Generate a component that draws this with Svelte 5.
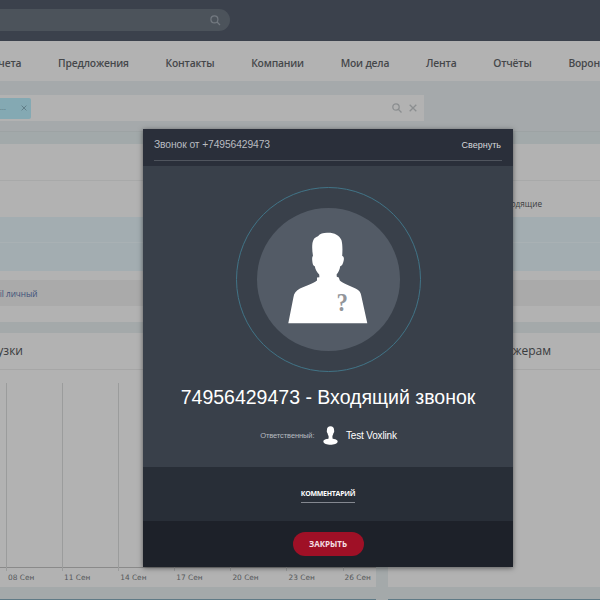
<script>
  const sections = ['Предложения', 'Контакты', 'Компании', 'Мои дела', 'Лента', 'Отчёты', 'Воронка'];
  const days = ['08 Сен', '11 Сен', '14 Сен', '17 Сен', '20 Сен', '23 Сен', '26 Сен'];
</script>

<div class="screen">
  <header class="top">
    <div class="search">
      <svg width="11" height="11" viewBox="0 0 11 11"><circle cx="4.4" cy="4.4" r="3.5" /><path d="M7 7 L10 10" /></svg>
    </div>
  </header>

  <nav>
    <span class="cut">Счета</span>
    {#each sections as s}<span>{s}</span>{/each}
  </nav>

  <div class="filter">
    <div class="filter-bar">
      <div class="tag"><span>...</span><svg width="6" height="6" viewBox="0 0 6 6"><path d="M.6 .6 L5.4 5.4 M5.4 .6 L.6 5.4" /></svg></div>
      <div class="tools">
        <svg width="10" height="10" viewBox="0 0 10 10"><circle cx="4" cy="4" r="3.2" /><path d="M6.4 6.4 L9.5 9.5" /></svg>
        <svg width="8" height="8" viewBox="0 0 8 8"><path d="M.7 .7 L7.3 7.3 M7.3 .7 L.7 7.3" /></svg>
      </div>
    </div>
  </div>
  <div class="strip"></div>

  <section class="list">
    <div class="list-head"></div>
    <div class="row plain"><span>Входящие</span></div>
    <div class="row blue first"></div>
    <div class="row blue"></div>
    <div class="row foot"><span>Email личный</span></div>
  </section>

  <div class="cards">
    <section class="card chart">
      <h2><span>Нагрузки</span></h2>
      <div class="plot">
        {#each days as d}<div class="col"></div>{/each}
      </div>
      <div class="labels">
        {#each days as d}<span>{d}</span>{/each}
      </div>
    </section>
    <section class="card managers">
      <h2><span>менеджерам</span></h2>
    </section>
  </div>
  <div class="next"><i></i><i></i></div>

  <div class="modal">
    <div class="bar">
      <div class="bar-in"><span class="from">Звонок от +74956429473</span><span class="min">Свернуть</span></div>
    </div>
    <div class="body">
      <div class="ring">
        <div class="disc">
          <svg width="80" height="92" viewBox="0 0 80 92">
            <path fill="#fff" d="M39 .7 C46 .4 51.5 3 53.4 8 C54.6 12 54.6 18 54.2 24 C56.8 24.5 56 29 54.6 32 C54 33.6 53 33.8 52.2 34.2 C51.8 38 50.2 40.5 48.6 42.5 L48.8 44.8 L50.8 45.6 L51.8 48.6 C54.5 51 62 54 67.5 56.6 C71.5 58.5 72.6 60.5 73.2 63.5 L79.3 91.3 L.3 91.3 L5.4 65.5 C6 61.5 8 58.6 12 56.6 C18 53.4 26 51 29 48.4 L29 45.6 L31.4 45.2 L31.2 42.5 C29 40 27.2 37.5 26.8 34.2 C25 34 24.4 31 24.2 28 C24 25.6 24.4 24.4 25 24 C23.9 18 23.8 11 25.4 8 C26.8 5 28.4 5.2 30 4.2 C32 1.6 35 .8 39 .7 Z" />
            <text transform="translate(48.6 79) scale(.88 1)">?</text>
          </svg>
        </div>
      </div>
      <div class="title">74956429473 - Входящий звонок</div>
      <div class="owner">
        <span class="resp">Ответственный:</span>
        <svg width="15" height="19" viewBox="0 0 15 19"><path fill="#fff" d="M7.5 .2 C10 .2 11.2 1.8 11 4 C11.4 5 11.2 6.6 10.5 7 C10.2 8.4 9.8 9.3 9.4 10 L9.5 12.4 C11 13 14 13.2 14.5 14.7 C15.5 17.5 11 18.7 7.5 18.7 C4 18.7 -.5 17.5 .5 14.7 C1 13.2 4.3 13 5.6 12.4 L5.6 10 C5.2 9.3 4.7 8.4 4.5 7 C3.8 6.6 3.6 5 4 4 C3.8 1.8 5 .2 7.5 .2 Z" /></svg>
        <span class="name">Test Voxlink</span>
      </div>
    </div>
    <div class="comment"><span>КОММЕНТАРИЙ</span></div>
    <div class="actions"><button>ЗАКРЫТЬ</button></div>
  </div>
</div>

<style>
  .screen { position: relative; width: 600px; height: 600px; overflow: hidden; background: #a4a9aa; font-family: "Open Sans", "Noto Sans", sans-serif; color: #3a3c3e; }
  .screen * { box-sizing: border-box; }
  svg { display: block; fill: none; stroke: none; flex: none; }
  .top { height: 41px; padding-top: 9px; background: #3b414c; }
  .search { width: 230px; height: 22px; border-radius: 0 11px 11px 0; background: #4c535b; display: flex; align-items: center; justify-content: flex-end; padding-right: 9px; }
  .search svg { stroke: #737980; stroke-width: 1.2; }
  nav { height: 40px; background: #b2b2b2; display: flex; justify-content: flex-start; gap: 36.8px; line-height: 44px; font-size: 10.3px; font-weight: 600; letter-spacing: -.18px; color: #45474a; white-space: nowrap; }
  nav span { flex: none; }
  nav .cut { width: 21.3px; display: flex; justify-content: flex-end; }
  .filter { height: 51px; padding-top: 14px; border-bottom: 1px solid #9da3a4; background: #a5a9ab; }
  .filter-bar { width: 424px; height: 26px; background: #b2b2b2; display: flex; align-items: center; justify-content: space-between; padding-right: 7px; }
  .tag { width: 31px; height: 21px; border-radius: 0 2px 2px 0; background: #84a9b3; display: flex; align-items: center; justify-content: space-between; padding: 0 4px 0 0; font-size: 7px; line-height: 16px; letter-spacing: .2px; color: #4e6c78; }
  .tag svg { stroke: #5d7a84; stroke-width: .9; }
  .tools { display: flex; align-items: center; gap: 7px; }
  .tools svg { stroke: #8b8e90; stroke-width: 1.3; }
  .strip { height: 12px; background: #a2a9aa; }
  .list { height: 178px; background: #b2b2b2; }
  .list-head { height: 37px; border-bottom: 1px solid #a8a9a9; }
  .row { display: flex; align-items: center; font-size: 8.2px; white-space: nowrap; }
  .plain { height: 36px; padding: 9px 58px 0 0; justify-content: flex-end; }
  .blue { height: 28px; background: #a3adb1; }
  .blue.first { height: 26px; border-bottom: 1px solid #a9b1b4; }
  .foot { height: 26px; margin-top: 9px; background: #aaaaaa; color: #3d5079; }
  .foot span { width: 37.5px; display: flex; justify-content: flex-end; flex: none; }
  .cards { display: flex; gap: 12px; padding-top: 11px; }
  .card { height: 254px; background: #b2b2b2; }
  .chart { width: 376px; overflow: hidden; }
  .managers { flex: 1; }
  h2 { margin: 0; height: 37px; border-bottom: 1px solid #a6a6a6; font-size: 12px; line-height: 36px; font-weight: 400; white-space: nowrap; display: flex; justify-content: flex-end; }
  .chart h2 { padding-right: 353px; }
  .managers h2 { padding-right: 49px; }
  .plot { height: 198px; padding: 13px 0 0 6px; display: flex; background: linear-gradient(#8a8a8a, #8a8a8a) 0 197px / 100% 1px no-repeat; }
  .col { width: 56.1px; flex: none; height: 188px; border-left: 1px solid #9b9c9c; }
  .labels { display: flex; padding-left: 8px; font: 7.4px/19px "DejaVu Sans", sans-serif; color: #55585a; white-space: nowrap; }
  .labels span { width: 56.1px; flex: none; }
  .next { height: 13px; padding-top: 12px; display: flex; gap: 12px; }
  .next i { flex: none; width: 376px; height: 1px; background: #5f7a86; }

  .modal { position: absolute; left: 143px; top: 129px; width: 370px; height: 438px; box-shadow: 0 1px 5px rgba(0, 0, 0, .5); font-family: "Liberation Sans", Arial, sans-serif; color: #fff; white-space: nowrap; display: flex; flex-direction: column; }
  .bar { height: 37px; padding: 0 11px; background: #2a2f3a; }
  .bar-in { height: 32px; border-bottom: 1px solid #50555e; display: flex; justify-content: space-between; line-height: 31px; }
  .from { font-size: 10.3px; letter-spacing: -.1px; color: #b9bcc1; }
  .min { font-size: 9px; line-height: 32px; color: #d6d8db; padding-right: 1px; }
  .body { height: 301px; background: #39404a; display: flex; flex-direction: column; align-items: center; padding-top: 21px; }
  .ring { width: 185px; height: 185px; border: 1px solid #417487; border-radius: 50%; display: flex; align-items: center; justify-content: center; flex: none; }
  .disc { width: 143px; height: 143px; border-radius: 50%; background: #535b66; display: flex; justify-content: center; padding-top: 24px; }
  .disc text { font: bold 26px "Liberation Serif", serif; fill: #92959a; }
  .title { margin-top: 12px; font-size: 19.5px; line-height: 26px; }
  .owner { margin-top: 15px; height: 20px; display: flex; align-items: center; padding-left: 1px; }
  .resp { font-size: 7.5px; letter-spacing: -.1px; color: #b7bbc0; margin-right: 8.5px; }
  .name { font-size: 10px; letter-spacing: -.16px; margin-left: 8px; }
  .comment { height: 54px; background: #282e37; display: flex; justify-content: center; padding-top: 19px; font: bold 7px/15px "Open Sans", sans-serif; letter-spacing: -.27px; }
  .comment span { height: 17px; border-bottom: 1px solid #848890; }
  .actions { height: 46px; background: #1d2129; display: flex; justify-content: center; padding-top: 11px; }
  button { width: 71px; height: 24px; border: 0; padding: 0; border-radius: 12px; background: #9f1026; color: #f5dfe3; font: bold 8px/24px "Open Sans", sans-serif; }
</style>
